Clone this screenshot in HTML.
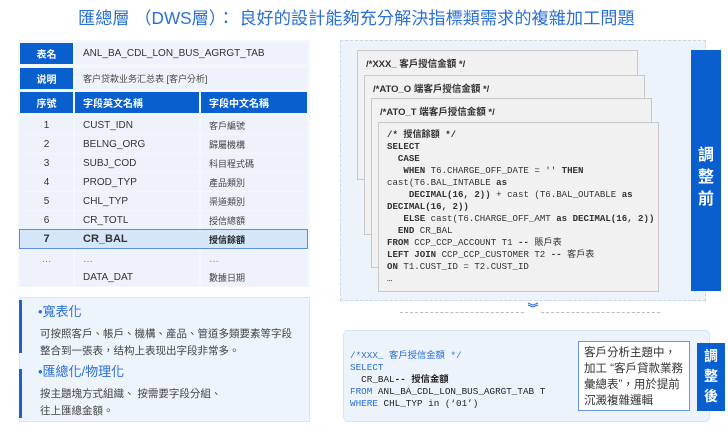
<!DOCTYPE html>
<html><head><meta charset="utf-8"><style>
*{margin:0;padding:0;box-sizing:border-box}
body{width:728px;height:441px;background:#fff;position:relative;overflow:hidden;font-family:"Liberation Sans","Noto Sans CJK TC",sans-serif;color:#333}
.a{position:absolute}
.title{left:78px;top:4px;font-size:17.2px;color:#2a6fd6;white-space:nowrap}
.c{position:absolute;font-size:10px;display:flex;align-items:center}
.hd{background:#0a5fcf;color:#fff;font-weight:bold;justify-content:center}
.hd2{background:#0a5fcf;color:#fff;font-weight:bold;padding-left:8px}
.lt{background:#eef3fb;padding-left:8px}
.cn{font-size:9px;color:#444}
.card{position:absolute;background:#f1f1f1;border:1px solid #c8c8c8;font-size:9.5px;padding:5px 8px;font-weight:bold;color:#333}
pre{font-family:"Liberation Mono","Noto Sans CJK TC",monospace;font-size:9.1px;line-height:12px;color:#333}
.lab{position:absolute;background:#0a5fcf;color:#fff;font-weight:bold;font-size:16px;text-align:center;line-height:22px}
</style></head><body>
<div class="a title">匯總層 （DWS層）：  良好的設計能夠充分解決指標類需求的複雜加工問題</div>

<div class="a" style="left:18px;top:40px;width:292px;height:247px;background:#f3f6fa"></div>
<div class="c hd" style="left:20px;top:43px;width:53px;height:21px">表名</div>
<div class="c lt" style="left:75px;top:43px;width:232px;height:21px">ANL_BA_CDL_LON_BUS_AGRGT_TAB</div>
<div class="c hd" style="left:20px;top:68px;width:53px;height:21px">说明</div>
<div class="c lt cn" style="left:75px;top:68px;width:232px;height:21px">客户贷款业务汇总表 [客户分析]</div>
<div class="c hd" style="left:20px;top:92px;width:53px;height:21px">序號</div>
<div class="c hd2" style="left:75px;top:92px;width:124px;height:21px">字段英文名稱</div>
<div class="c hd2" style="left:201px;top:92px;width:106px;height:21px">字段中文名稱</div>

<div class="c lt" style="left:20px;top:116px;width:53px;height:18px;justify-content:center;padding:0">1</div><div class="c lt" style="left:75px;top:116px;width:124px;height:18px">CUST_IDN</div><div class="c lt cn" style="left:201px;top:116px;width:106px;height:18px">客戶編號</div>
<div class="c lt" style="left:20px;top:135px;width:53px;height:18px;justify-content:center;padding:0">2</div><div class="c lt" style="left:75px;top:135px;width:124px;height:18px">BELNG_ORG</div><div class="c lt cn" style="left:201px;top:135px;width:106px;height:18px">歸屬機構</div>
<div class="c lt" style="left:20px;top:154px;width:53px;height:18px;justify-content:center;padding:0">3</div><div class="c lt" style="left:75px;top:154px;width:124px;height:18px">SUBJ_COD</div><div class="c lt cn" style="left:201px;top:154px;width:106px;height:18px">科目程式碼</div>
<div class="c lt" style="left:20px;top:173px;width:53px;height:18px;justify-content:center;padding:0">4</div><div class="c lt" style="left:75px;top:173px;width:124px;height:18px">PROD_TYP</div><div class="c lt cn" style="left:201px;top:173px;width:106px;height:18px">產品類別</div>
<div class="c lt" style="left:20px;top:192px;width:53px;height:18px;justify-content:center;padding:0">5</div><div class="c lt" style="left:75px;top:192px;width:124px;height:18px">CHL_TYP</div><div class="c lt cn" style="left:201px;top:192px;width:106px;height:18px">渠道類別</div>
<div class="c lt" style="left:20px;top:211px;width:53px;height:18px;justify-content:center;padding:0">6</div><div class="c lt" style="left:75px;top:211px;width:124px;height:18px">CR_TOTL</div><div class="c lt cn" style="left:201px;top:211px;width:106px;height:18px">授信總額</div>
<div class="a" style="left:19px;top:229px;width:289px;height:20px;background:#d4e6f7;border:1px solid #5d8fe0"></div>
<div class="c" style="left:20px;top:230px;width:53px;height:18px;justify-content:center;font-weight:bold;font-size:11px">7</div><div class="c" style="left:83px;top:230px;width:116px;height:18px;font-weight:bold;font-size:11px">CR_BAL</div><div class="c cn" style="left:209px;top:230px;width:98px;height:18px;font-weight:bold;color:#222">授信餘額</div>
<div class="c lt" style="left:20px;top:250px;width:53px;height:18px;justify-content:center;padding:0;color:#777">…</div><div class="c lt" style="left:75px;top:250px;width:124px;height:18px;color:#777">…</div><div class="c lt" style="left:201px;top:250px;width:106px;height:18px;color:#777">…</div>
<div class="c lt" style="left:20px;top:268px;width:53px;height:18px"></div><div class="c lt" style="left:75px;top:268px;width:124px;height:18px">DATA_DAT</div><div class="c lt cn" style="left:201px;top:268px;width:106px;height:18px">數據日期</div>

<div class="a" style="left:19px;top:297px;width:291px;height:125px;background:#eef4fc;border:1px solid #d5e6f8"></div>
<div class="a" style="left:19px;top:300px;width:3px;height:53px;background:#1d5fd0"></div>
<div class="a" style="left:19px;top:369px;width:3px;height:49px;background:#1d5fd0"></div>
<div class="a" style="left:38px;top:301px;font-size:13px;color:#2a6fd6">•寬表化</div>
<div class="a" style="left:40px;top:326px;font-size:10.5px;line-height:17px;color:#444;width:252px">可按照客戶、帳戶、機構、產品、管道多類要素等字段整合到一張表，结构上表现出字段非常多。</div>
<div class="a" style="left:38px;top:361px;font-size:13px;color:#2a6fd6">•匯總化/物理化</div>
<div class="a" style="left:40px;top:386px;font-size:10.5px;line-height:17px;color:#444;width:265px">按主題塊方式組織、 按需要字段分組、<br>往上匯總金額。</div>

<div class="a" style="left:340px;top:40px;width:366px;height:261px;background:#edf3fb;border:1px dashed #c9d6e6"></div>
<div class="card" style="left:357px;top:50px;width:281px;height:130px">/*XXX_ 客戶授信金額 */</div>
<div class="card" style="left:364px;top:75px;width:281px;height:160px">/*ATO_O 端客戶授信金額 */</div>
<div class="card" style="left:371px;top:98px;width:281px;height:170px">/*ATO_T 端客戶授信金額 */</div>
<div class="card" style="left:378px;top:122px;width:281px;height:170px;padding:6px 8px;font-weight:normal"><pre><b>/* 授信餘額 */
SELECT
  CASE
   WHEN</b> T6.CHARGE_OFF_DATE = '' <b>THEN</b>
cast(T6.BAL_INTABLE <b>as</b>
    <b>DECIMAL(16, 2))</b> + cast (T6.BAL_OUTABLE <b>as</b>
<b>DECIMAL(16, 2))</b>
   <b>ELSE</b> cast(T6.CHARGE_OFF_AMT <b>as DECIMAL(16, 2))</b>
  <b>END</b> CR_BAL
<b>FROM</b> CCP_CCP_ACCOUNT T1 <b>--</b> 賬戶表
<b>LEFT JOIN</b> CCP_CCP_CUSTOMER T2 <b>--</b> 客戶表
<b>ON</b> T1.CUST_ID = T2.CUST_ID
…</pre></div>
<div class="lab" style="left:691px;top:50px;width:30px;height:241px;padding-top:95px">調<br>整<br>前</div>

<div class="a" style="left:400px;top:312px;width:260px;border-top:1px dashed #bbb"></div>
<div class="a" style="left:525px;top:305px;width:16px;height:14px;background:#fff;color:#1d5fd0;font-size:11px;font-weight:bold;text-align:center;line-height:8px">︾</div>

<div class="a" style="left:343px;top:330px;width:367px;height:92px;background:#edf3fb;border:1px solid #d8e3f0;border-radius:5px"></div>
<pre class="a" style="left:350px;top:350px;font-size:9.3px;line-height:12px;color:#222"><span style="color:#2a6fd6">/*XXX_ 客戶授信金額 */
SELECT</span>
  CR_BAL<b>-- 授信金額</b>
<span style="color:#2a6fd6">FROM</span> ANL_BA_CDL_LON_BUS_AGRGT_TAB T
<span style="color:#2a6fd6">WHERE</span> CHL_TYP in (‘01’)</pre>
<div class="a" style="left:578px;top:341px;width:112px;height:70px;border:1.5px solid #6a98e0;background:#fff;font-size:11.5px;line-height:16px;padding:3px 5px 3px 5px;color:#333">客戶分析主題中，加工 “客戶貸款業務彙總表”，用於提前沉澱複雜邏輯</div>
<div class="lab" style="left:697px;top:343px;width:28px;height:68px;padding-top:3px;font-size:14px;line-height:20px">調<br>整<br>後</div>
</body></html>
